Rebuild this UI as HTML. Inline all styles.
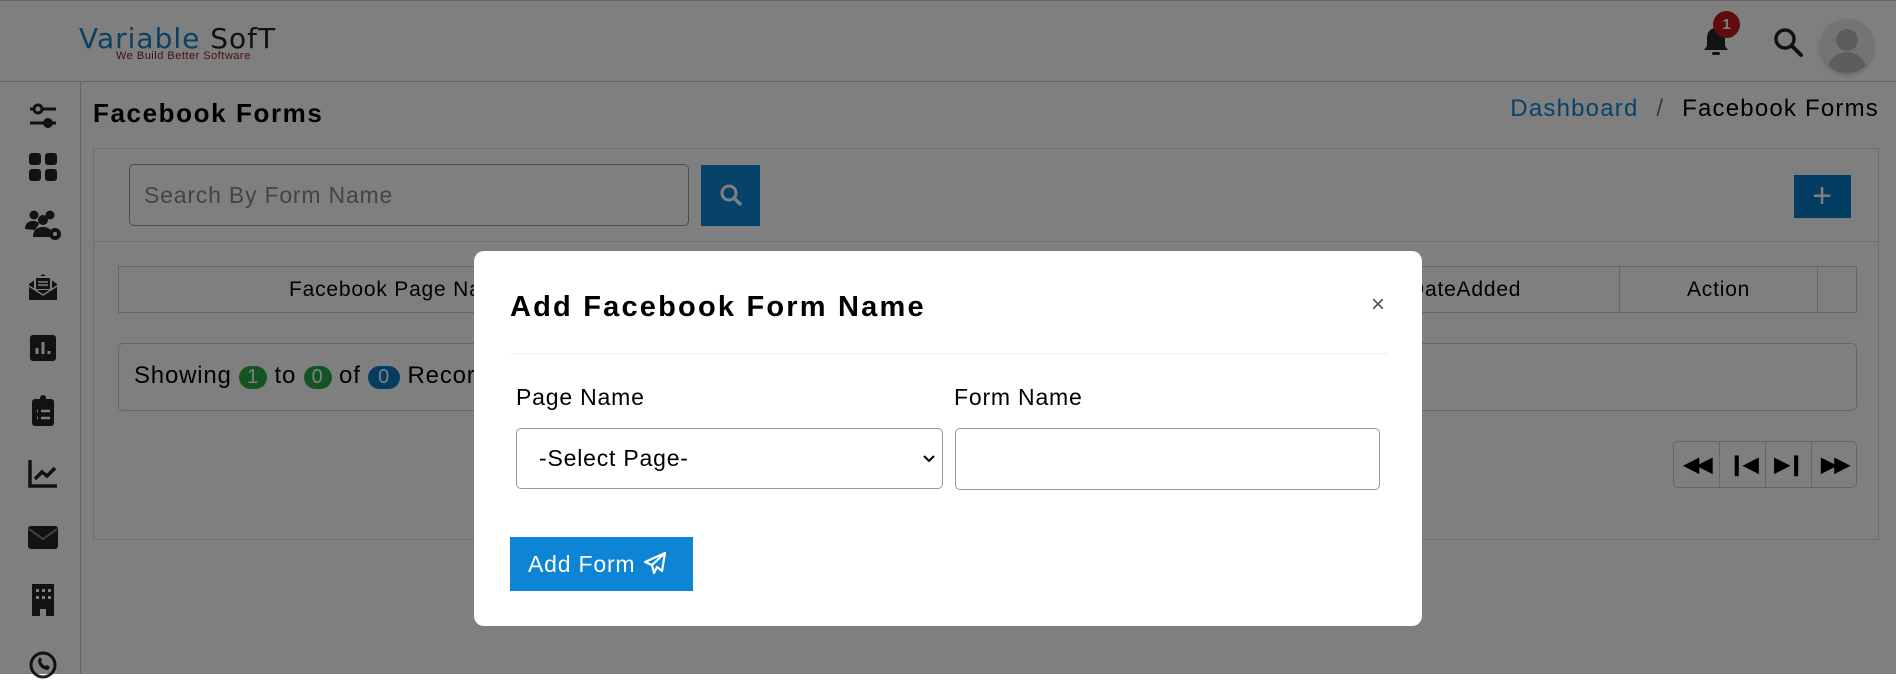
<!DOCTYPE html>
<html><head><meta charset="utf-8"><style>
*{box-sizing:border-box;margin:0;padding:0}
body{width:1896px;height:674px;overflow:hidden;background:#fff;font-family:"Liberation Sans",sans-serif;color:#000;position:relative;letter-spacing:.8px}
.abs{position:absolute}
.hdr{left:0;top:0;width:1896px;height:82px;border-bottom:1px solid #ccc;border-top:1px solid #ccc;background:#fff}
.side{left:0;top:82px;width:81px;height:592px;border-right:1px solid #ccc}
.ic{position:absolute;left:24px;width:38px;height:34px}
.overlay{left:0;top:0;width:1896px;height:674px;background:rgba(0,0,0,.5)}
.modal{left:474px;top:251px;width:948px;height:375px;background:#fff;border-radius:10px}
.pg{position:absolute;top:0;width:46px;height:46px;border-left:1px solid #ccc;letter-spacing:-2px}
</style></head><body>
<div class="abs hdr">
  <div class="abs" style="left:79px;top:21px;font-family:'DejaVu Sans','Liberation Sans',sans-serif;font-size:28px;letter-spacing:1px;line-height:34px"><span style="color:#1a7fc0">Variable</span> <span style="color:#222">SofT</span></div>
  <div class="abs" style="left:116px;top:49px;font-size:11px;color:#8a1a1a;letter-spacing:.5px">We Build Better Software</div>
  <svg class="abs" style="left:1700px;top:24px" width="32" height="34" viewBox="0 0 32 34"><path d="M16 3c-6 0-9 5-9 10v8l-3 4h24l-3-4v-8c0-5-3-10-9-10z" fill="#212529"/><rect x="12" y="27" width="8" height="3" rx="1.5" fill="#212529"/></svg>
  <div class="abs" style="left:1713px;top:10px;width:27px;height:27px;border-radius:50%;background:#c0171f;color:#fff;font-size:15px;font-weight:bold;text-align:center;line-height:27px;letter-spacing:0">1</div>
  <svg class="abs" style="left:1772px;top:25px" width="32" height="32" viewBox="0 0 32 32"><circle cx="13" cy="13" r="9" fill="none" stroke="#212529" stroke-width="3.5"/><path d="M20 20l9 9" stroke="#212529" stroke-width="4" stroke-linecap="round"/></svg>
  <div class="abs" style="left:1820px;top:18px;width:54px;height:54px;border-radius:50%;background:#e8e8e8;overflow:hidden;box-shadow:0 2px 5px rgba(0,0,0,.2)">
    <div class="abs" style="left:16px;top:10px;width:22px;height:22px;border-radius:50%;background:#bbb"></div>
    <div class="abs" style="left:7px;top:33px;width:40px;height:30px;border-radius:20px 20px 0 0;background:#bbb"></div>
  </div>
</div>
<div class="abs side">
  <svg class="ic" style="top:18px" viewBox="0 0 38 34"><circle cx="14" cy="9" r="4" fill="none" stroke="#212529" stroke-width="3"/><path d="M6 9h4M18 9h14M6 23h14M28 23h4" stroke="#212529" stroke-width="3"/><circle cx="24" cy="23" r="5" fill="#212529"/></svg>
  <svg class="ic" style="top:68px" viewBox="0 0 38 34"><rect x="5" y="3" width="12" height="12" rx="3" fill="#212529"/><rect x="21" y="3" width="12" height="12" rx="3" fill="#212529"/><rect x="5" y="19" width="12" height="12" rx="3" fill="#212529"/><rect x="21" y="19" width="12" height="12" rx="3" fill="#212529"/></svg>
  <svg class="ic" style="top:125px" viewBox="0 0 38 34"><circle cx="10" cy="8" r="4.5" fill="#212529"/><circle cx="26" cy="8" r="4.5" fill="#212529"/><circle cx="19" cy="13" r="5" fill="#212529"/><path d="M1 22c0-6 4-8 8-8s6 2 6 3l-4 6z" fill="#212529"/><path d="M9 30c0-7 4-10 10-10s8 3 8 5v5z" fill="#212529"/><circle cx="31" cy="27" r="6" fill="#212529"/><circle cx="31" cy="27" r="2" fill="#fff"/></svg>
  <svg class="ic" style="top:188px" viewBox="0 0 38 34"><path d="M5 14l14-10 14 10v16H5z" fill="#212529"/><rect x="10" y="6" width="18" height="14" fill="#fff"/><rect x="12" y="8" width="14" height="11" fill="#212529"/><path d="M14 12h10M14 15h10" stroke="#fff" stroke-width="1.5"/><path d="M5 16l14 9 14-9" fill="none" stroke="#fff" stroke-width="1.5"/></svg>
  <svg class="ic" style="top:250px" viewBox="0 0 38 34"><rect x="6" y="3" width="26" height="26" rx="3" fill="#212529"/><path d="M13 22v-6M19 22V10M25 22v-3" stroke="#fff" stroke-width="3"/></svg>
  <svg class="ic" style="top:312px" viewBox="0 0 38 34"><rect x="8" y="5" width="22" height="27" rx="3" fill="#212529"/><circle cx="19" cy="4" r="3" fill="#212529"/><path d="M13 17h1M17 17h9M13 24h1M17 24h9" stroke="#fff" stroke-width="2.5"/></svg>
  <svg class="ic" style="top:375px" viewBox="0 0 38 34"><path d="M6 3v26h27" fill="none" stroke="#212529" stroke-width="3.5"/><path d="M11 22l7-7 5 4 8-8" fill="none" stroke="#212529" stroke-width="3.5"/></svg>
  <svg class="ic" style="top:438px" viewBox="0 0 38 34"><rect x="4" y="6" width="30" height="23" rx="3" fill="#212529"/><path d="M5 9l14 10 14-10" fill="none" stroke="#808080" stroke-width="2"/></svg>
  <svg class="ic" style="top:500px" viewBox="0 0 38 34"><path d="M8 2h22v32H22v-7h-6v7H8z" fill="#212529"/><g fill="#fff"><rect x="12" y="7" width="3" height="3"/><rect x="18" y="7" width="3" height="3"/><rect x="24" y="7" width="3" height="3"/><rect x="12" y="14" width="3" height="3"/><rect x="18" y="14" width="3" height="3"/><rect x="24" y="14" width="3" height="3"/></g></svg>
  <svg class="ic" style="top:566px" viewBox="0 0 38 34"><circle cx="19" cy="17" r="12" fill="none" stroke="#212529" stroke-width="3"/><path d="M14 12c0 5 4 10 10 10l2-3-3-2-2 1c-2-1-3-3-4-4l1-2-2-3z" fill="#212529"/></svg>
</div>

<div class="abs" style="left:93px;top:98px;font-size:26px;font-weight:bold;letter-spacing:1.6px">Facebook Forms</div>
<div class="abs" style="right:17px;top:95px;font-size:24px;letter-spacing:1.2px"><span style="color:#0d84d4">Dashboard</span> <span style="color:#6c757d;margin:0 10px">/</span> Facebook Forms</div>

<div class="abs" style="left:93px;top:148px;width:1786px;height:392px;border:1px solid #ddd">
  <div class="abs" style="left:35px;top:15px;width:560px;height:62px;border:1px solid #999;border-radius:5px;font-size:23px;color:#888;padding:17px 14px">Search By Form Name</div>
  <div class="abs" style="left:607px;top:16px;width:59px;height:61px;background:#0d84d4"><svg style="margin:18px" width="24" height="24" viewBox="0 0 24 24"><circle cx="10" cy="10" r="7" fill="none" stroke="#fff" stroke-width="3"/><path d="M15 15l6 6" stroke="#fff" stroke-width="3.5" stroke-linecap="round"/></svg></div>
  <div class="abs" style="left:1700px;top:26px;width:57px;height:43px;background:#077cc4;color:#fff;font-size:34px;text-align:center;line-height:42px">+</div>
  <div class="abs" style="left:0;top:92px;width:1784px;border-top:1px solid #ddd"></div>
  <div class="abs" style="left:24px;top:117px;width:1739px;height:47px;border:1px solid #ccc;font-size:21px">
    <div class="abs" style="left:170px;top:11px">Facebook Page Name</div>
    <div class="abs" style="left:1290px;top:11px">DateAdded</div>
    <div class="abs" style="left:1500px;top:0;width:1px;height:46px;background:#ccc"></div>
    <div class="abs" style="left:1568px;top:11px">Action</div>
    <div class="abs" style="left:1698px;top:0;width:1px;height:46px;background:#ccc"></div>
  </div>
  <div class="abs" style="left:24px;top:194px;width:1739px;height:68px;border:1px solid #ccc;border-radius:5px;font-size:24px;padding:18px 15px">Showing <span style="display:inline-block;background:#28a745;color:#fff;border-radius:14px;padding:0 8px;font-size:20px">1</span> to <span style="display:inline-block;background:#28a745;color:#fff;border-radius:14px;padding:0 8px;font-size:20px">0</span> of <span style="display:inline-block;background:#0a7ac0;color:#fff;border-radius:14px;padding:0 10px;font-size:20px">0</span> Records</div>
  <div class="abs" style="left:1579px;top:292px;width:184px;height:47px;border:1px solid #ccc;border-radius:5px;overflow:hidden;font-size:20px;font-weight:bold">
    <div class="pg" style="left:0;border:none;text-align:center;line-height:46px">◀◀</div>
    <div class="pg" style="left:45px;text-align:center;line-height:46px">❙◀</div>
    <div class="pg" style="left:91px;text-align:center;line-height:46px">▶❙</div>
    <div class="pg" style="left:137px;text-align:center;line-height:46px">▶▶</div>
  </div>
</div>

<div class="abs overlay"></div>

<div class="abs modal">
  <div class="abs" style="left:36px;top:40px;font-size:29px;font-weight:bold;letter-spacing:2.2px">Add Facebook Form Name</div>
  <div class="abs" style="left:897px;top:40px;font-size:24px;color:#555">×</div>
  <div class="abs" style="left:36px;top:102px;width:877px;border-top:1px solid #eee"></div>
  <div class="abs" style="left:42px;top:133px;font-size:23px">Page Name</div>
  <div class="abs" style="left:480px;top:133px;font-size:23px">Form Name</div>
  <div class="abs" style="left:42px;top:177px;width:427px;height:61px;border:1px solid #999;border-radius:5px;font-size:23px;padding:16px 22px">-Select Page-<svg class="abs" style="right:6px;top:25px" width="14" height="10" viewBox="0 0 14 10"><path d="M2 2l5 5 5-5" fill="none" stroke="#000" stroke-width="2"/></svg></div>
  <div class="abs" style="left:481px;top:177px;width:425px;height:62px;border:1px solid #999;border-radius:5px"></div>
  <div class="abs" style="left:36px;top:286px;width:183px;height:54px;background:#0d84d4;color:#fff;font-size:23px;padding:14px 18px;white-space:nowrap">Add Form <svg style="vertical-align:-3px" width="24" height="24" viewBox="0 0 24 24"><path d="M22 2L2 11l7 3 2 8 3-6 5 4z M22 2L9 14" fill="none" stroke="#fff" stroke-width="2.2" stroke-linejoin="round"/></svg></div>
</div>
</body></html>
